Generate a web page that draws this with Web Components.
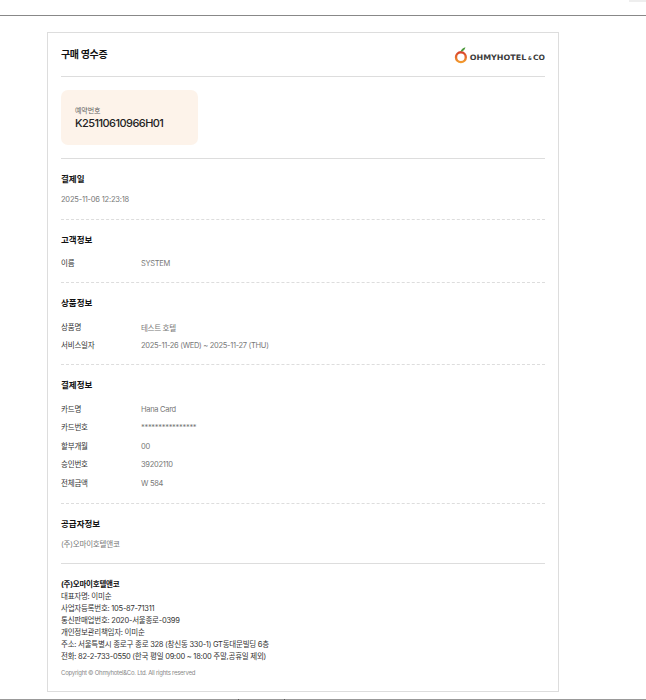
<!DOCTYPE html>
<html lang="ko">
<head>
<meta charset="utf-8">
<title>구매 영수증</title>
<style>
  html, body { margin: 0; padding: 0; background: #fff; overflow: hidden; }
  body { font-family: Inter, "Noto Sans CJK KR", sans-serif; }
</style>
</head>
<body>
<receipt-page>
  <receipt-card>
    <receipt-header title="구매 영수증"></receipt-header>
    <booking-box label="예약번호" value="K25110610966H01"></booking-box>
    <receipt-section heading="결제일" tight>
      <plain-text>2025-11-06 12:23:18</plain-text>
    </receipt-section>
    <receipt-section heading="고객정보">
      <info-row label="이름">SYSTEM</info-row>
    </receipt-section>
    <receipt-section heading="상품정보">
      <info-row label="상품명">테스트 호텔</info-row>
      <info-row label="서비스일자">2025-11-26 (WED) ~ 2025-11-27 (THU)</info-row>
    </receipt-section>
    <receipt-section heading="결제정보" style="padding-bottom: 11px">
      <info-row label="카드명">Hana Card</info-row>
      <info-row label="카드번호">****************</info-row>
      <info-row label="할부개월">00</info-row>
      <info-row label="승인번호">39202110</info-row>
      <info-row label="전체금액">W 584</info-row>
    </receipt-section>
    <receipt-section heading="공급자정보" tight solid>
      <plain-text>(주)오마이호텔앤코</plain-text>
    </receipt-section>
    <company-info name="(주)오마이호텔앤코" copyright="Copyright © Ohmyhotel&amp;Co. Ltd. All rights reserved">
      <div>대표자명: 이미순</div>
      <div>사업자등록번호: 105-87-71311</div>
      <div>통신판매업번호: 2020-서울종로-0399</div>
      <div>개인정보관리책임자: 이미순</div>
      <div>주소: 서울특별시 종로구 종로 328 (창신동 330-1) GT동대문빌딩 6층</div>
      <div>전화: 82-2-733-0550 (한국 평일 09:00 ~ 18:00 주말,공휴일 제외)</div>
    </company-info>
  </receipt-card>
</receipt-page>

<script>
const FONT = 'Inter, "Noto Sans CJK KR", sans-serif';

class ReceiptPage extends HTMLElement {
  constructor() {
    super();
    this.attachShadow({ mode: 'open' });
    this.shadowRoot.innerHTML = `
      <style>
        :host { display: block; width: 646px; height: 700px; font-family: ${FONT}; overflow: hidden; }
        #corner { height: 2px; width: 17px; margin-left: auto; background: #eee; }
        #top { height: 1px; margin-top: 13px; background: #888; }
        #main { padding: 16px 87px 0 47px; }
        /* two darker dots sit on the bottom rule */
        #bottom { position: relative; height: 1px; margin-top: 7px; background: #999; }
        #bottom i { position: absolute; top: 0; width: 1px; height: 1px; background: #555; }
      </style>
      <div id="corner"></div>
      <div id="top"></div>
      <div id="main"><slot></slot></div>
      <div id="bottom"><i style="left: 238px"></i><i style="left: 284px"></i></div>
    `;
  }
}

class ReceiptCard extends HTMLElement {
  constructor() {
    super();
    this.attachShadow({ mode: 'open' });
    this.shadowRoot.innerHTML = `
      <style>
        :host { display: block; box-sizing: border-box; width: 512px; height: 660px; padding: 0 13px; border: 1px solid #ddd; background: #fff; }
      </style>
      <slot></slot>
    `;
  }
}

class ReceiptHeader extends HTMLElement {
  constructor() {
    super();
    this.attachShadow({ mode: 'open' });
    this.shadowRoot.innerHTML = `
      <style>
        :host { display: flex; align-items: center; justify-content: space-between; box-sizing: border-box; height: 44px; padding-top: 3px; border-bottom: 1px solid #ddd; }
        h1 { margin: -5px 0 0; font-size: 10px; line-height: 14px; font-weight: 700; letter-spacing: -0.35px; color: #111; }
        svg { display: block; }
        text { font-family: "DejaVu Sans", sans-serif; font-weight: 700; fill: #3c3c3c; }
      </style>
      <h1></h1>
      <svg width="92" height="18" viewBox="0 0 92 18" aria-label="Ohmyhotel&Co">
        <defs>
          <linearGradient id="ring" x1="0" y1="0" x2="0" y2="1">
            <stop offset="0" stop-color="#d9442b"/>
            <stop offset="1" stop-color="#f29a2e"/>
          </linearGradient>
        </defs>
        <circle cx="7.9" cy="10.2" r="4.9" fill="none" stroke="url(#ring)" stroke-width="2.4"/>
        <path d="M7.6 4.6 C8 2.8 9.6 .8 12.4 .2 C12 2.6 10.2 4.2 7.6 4.6 Z" fill="#4c9a3c"/>
        <text x="16.7" y="12.8" font-size="7.4" textLength="56.6" lengthAdjust="spacingAndGlyphs">OHMYHOTEL</text>
        <text x="75" y="12.6" font-size="5" textLength="3.8" lengthAdjust="spacingAndGlyphs">&amp;</text>
        <text x="80" y="12.8" font-size="7.4" textLength="12" lengthAdjust="spacingAndGlyphs">CO</text>
      </svg>
    `;
    this.shadowRoot.querySelector('h1').textContent = this.getAttribute('title');
  }
}

class BookingBox extends HTMLElement {
  constructor() {
    super();
    this.attachShadow({ mode: 'open' });
    this.shadowRoot.innerHTML = `
      <style>
        :host { display: block; padding: 13px 0; border-bottom: 1px solid #ddd; }
        #box { box-sizing: border-box; width: 137px; height: 55px; padding: 15px 14px 0; border-radius: 7px; background: #fdf3ea; }
        #label { font-size: 7px; line-height: 11px; letter-spacing: -0.1px; color: #666; }
        #value { font-size: 11px; line-height: 14px; font-weight: 500; letter-spacing: -0.55px; color: #222; }
      </style>
      <div id="box">
        <div id="label"></div>
        <div id="value"></div>
      </div>
    `;
    this.shadowRoot.querySelector('#label').textContent = this.getAttribute('label');
    this.shadowRoot.querySelector('#value').textContent = this.getAttribute('value');
  }
}

class ReceiptSection extends HTMLElement {
  constructor() {
    super();
    this.attachShadow({ mode: 'open' });
    this.shadowRoot.innerHTML = `
      <style>
        :host { display: block; padding: 13px 0 10px; border-bottom: 1px dashed #ddd; }
        :host([solid]) { border-bottom: 1px solid #ddd; }
        :host([tight]) #body { margin-top: 4px; }
        h2 { margin: 0; font-size: 8.5px; line-height: 14px; font-weight: 700; color: #111; }
        #body { margin-top: 7px; }
      </style>
      <h2></h2>
      <div id="body"><slot></slot></div>
    `;
    this.shadowRoot.querySelector('h2').textContent = this.getAttribute('heading');
  }
}

class InfoRow extends HTMLElement {
  constructor() {
    super();
    this.attachShadow({ mode: 'open' });
    this.shadowRoot.innerHTML = `
      <style>
        :host { display: grid; grid-template-columns: 80px 1fr; box-sizing: border-box; height: 18.5px; padding-top: 2px; align-items: center; font-size: 7.5px; }
        #label { padding-bottom: 2px; letter-spacing: -0.2px; color: #333; }
        #value { letter-spacing: -0.3px; color: #777; }
      </style>
      <div id="label"></div>
      <div id="value"><slot></slot></div>
    `;
    this.shadowRoot.querySelector('#label').textContent = this.getAttribute('label');
  }
}

class PlainText extends HTMLElement {
  constructor() {
    super();
    this.attachShadow({ mode: 'open' });
    this.shadowRoot.innerHTML = `
      <style>
        :host { display: flex; height: 18.5px; align-items: center; font-size: 7.5px; letter-spacing: -0.2px; color: #777; }
      </style>
      <slot></slot>
    `;
  }
}

class CompanyInfo extends HTMLElement {
  constructor() {
    super();
    this.attachShadow({ mode: 'open' });
    this.shadowRoot.innerHTML = `
      <style>
        :host { display: block; padding-top: 15px; font-size: 7.5px; line-height: 12px; letter-spacing: -0.25px; color: #333; }
        #name { font-weight: 700; color: #111; }
        #copy { margin-top: 4px; font-size: 6px; color: #888; }
      </style>
      <div id="name"></div>
      <slot></slot>
      <div id="copy"></div>
    `;
    this.shadowRoot.querySelector('#name').textContent = this.getAttribute('name');
    this.shadowRoot.querySelector('#copy').textContent = this.getAttribute('copyright');
  }
}

customElements.define('receipt-page', ReceiptPage);
customElements.define('receipt-card', ReceiptCard);
customElements.define('receipt-header', ReceiptHeader);
customElements.define('booking-box', BookingBox);
customElements.define('receipt-section', ReceiptSection);
customElements.define('info-row', InfoRow);
customElements.define('plain-text', PlainText);
customElements.define('company-info', CompanyInfo);
</script>
</body>
</html>
